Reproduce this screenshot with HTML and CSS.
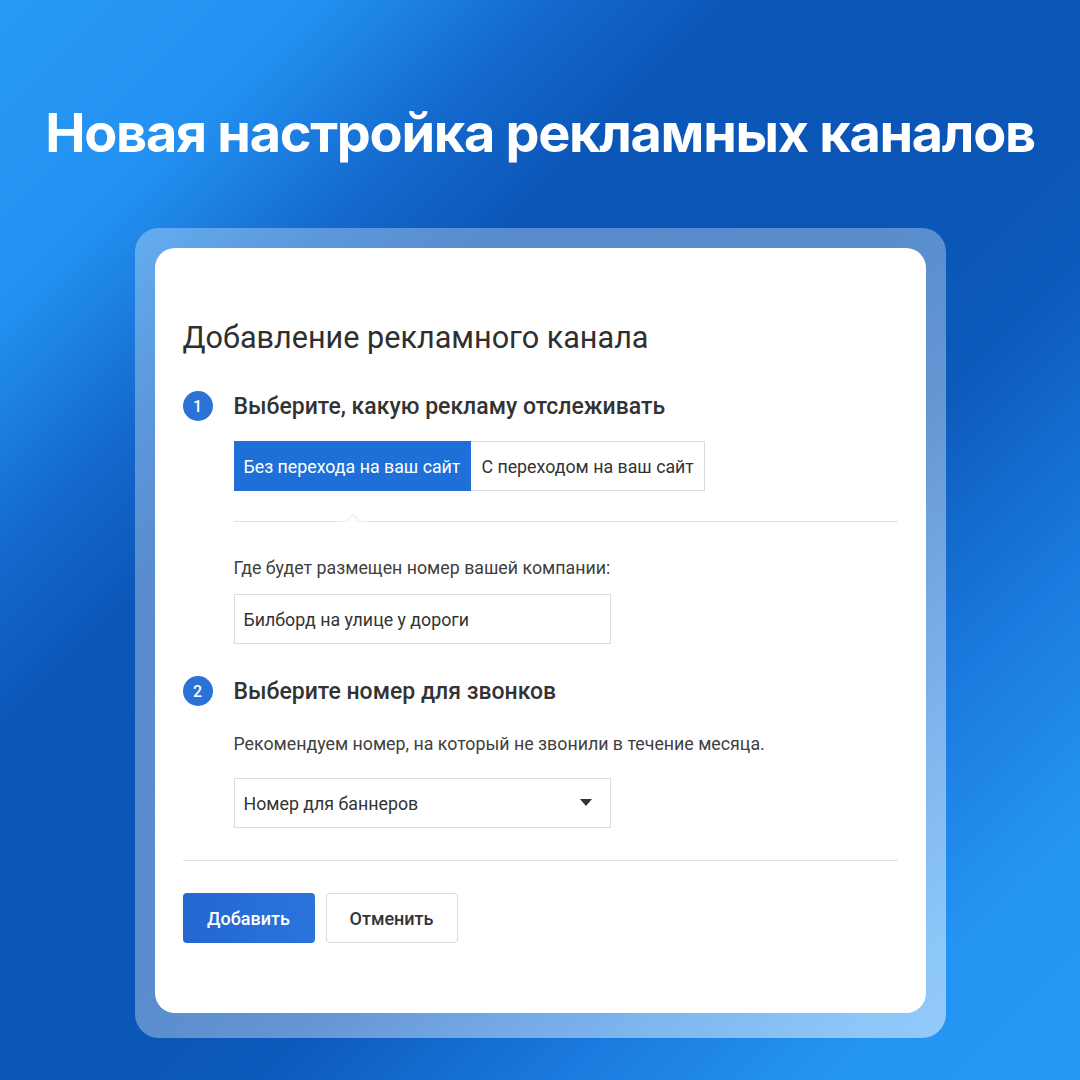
FILE: index.html
```html
<!DOCTYPE html>
<html lang="ru">
<head>
    <meta charset="UTF-8">
    <meta name="viewport" content="width=device-width, initial-scale=1.0">
    <title>Новая настройка рекламных каналов</title>
    <link rel="stylesheet" href="styles.css">
</head>
<body>
    <div class="page">
        <h1 class="headline">Новая настройка рекламных каналов</h1>

        <div class="glass">
            <div class="card">
                <h2 class="card-title">Добавление рекламного канала</h2>

                <div class="step">
                    <span class="step-num">1</span>
                    <span class="step-title">Выберите, какую рекламу отслеживать</span>
                </div>

                <div class="step-body">
                    <div class="tabs">
                        <button class="tab active">Без перехода на ваш сайт</button>
                        <button class="tab">С переходом на ваш сайт</button>
                    </div>
                    <div class="tab-rail">
                        <svg class="notch" width="30" height="10" viewBox="0 0 30 10">
                            <path d="M0 9.5 L8 9.5 L15 2.5 L22 9.5 L30 9.5" fill="#fff" stroke="#e0e0e0" stroke-width="1"/>
                            <rect x="0" y="9.5" width="30" height="1" fill="#fff"/>
                        </svg>
                    </div>

                    <p class="label">Где будет размещен номер вашей компании:</p>
                    <div class="field">Билборд на улице у дороги</div>
                </div>

                <div class="step step-second">
                    <span class="step-num">2</span>
                    <span class="step-title">Выберите номер для звонков</span>
                </div>

                <div class="step-body">
                    <p class="hint">Рекомендуем номер, на который не звонили в течение месяца.</p>
                    <div class="field select">
                        <span>Номер для баннеров</span>
                        <svg width="12" height="8" viewBox="0 0 12 8">
                            <path d="M0 0 H12 L6 7 Z" fill="#333"/>
                        </svg>
                    </div>
                </div>

                <hr class="divider">

                <div class="actions">
                    <button class="btn btn-primary">Добавить</button>
                    <button class="btn btn-secondary">Отменить</button>
                </div>
            </div>
        </div>
    </div>
</body>
</html>
```

FILE: styles.css
```css
* {
    box-sizing: border-box;
}

body {
    margin: 0;
    width: 1080px;
    height: 1080px;
    overflow: hidden;
    font-family: Roboto, "Noto Sans", sans-serif;
    background: linear-gradient(135deg, #2899f7 0%, #2290f0 15%, #1468cc 26%, #0b57b8 34%, #0a55b5 50%, #0c5abb 62%, #1a78dd 75%, #2494f2 88%, #2698f5 100%);
}

.page {
    display: flex;
    flex-direction: column;
    align-items: center;
    height: 100%;
}

.headline {
    margin: 99px 0 0;
    font-family: Inter, "Noto Sans", sans-serif;
    font-weight: 700;
    font-size: 54px;
    line-height: 68px;
    letter-spacing: -1.3px;
    color: #ffffff;
    white-space: nowrap;
}

.glass {
    margin-top: 61px;
    width: 811px;
    padding: 20px 20px 25px;
    border-radius: 24px;
    background: linear-gradient(135deg, rgba(255, 255, 255, 0.3) 0%, rgba(255, 255, 255, 0.33) 50%, rgba(255, 255, 255, 0.5) 100%);
}

.card {
    background: #ffffff;
    border-radius: 20px;
    padding: 72px 28px 70px;
    color: #333333;
}

.card-title {
    margin: 0;
    font-size: 30.6px;
    line-height: 36px;
    font-weight: 400;
    color: #2f2f2f;
}

.step {
    display: flex;
    align-items: center;
    gap: 21px;
    margin-top: 35px;
    height: 30px;
}

.step-second {
    margin-top: 32px;
}

.step-num {
    width: 30px;
    height: 30px;
    border-radius: 50%;
    background: #2a72d6;
    color: #ffffff;
    font-size: 16px;
    font-weight: 500;
    display: flex;
    align-items: center;
    justify-content: center;
}

.step-title {
    font-size: 23px;
    font-weight: 500;
    color: #333333;
}

.step-body {
    padding-left: 51px;
}

.tabs {
    display: flex;
    margin-top: 20px;
}

.tab {
    height: 50px;
    padding: 0 10px;
    font-family: Roboto, sans-serif;
    font-size: 17.8px;
    color: #333333;
    background: #ffffff;
    border: 1px solid #dadada;
    border-left: none;
}

.tab.active {
    background: #1e6fd7;
    border-color: #1e6fd7;
    color: #ffffff;
}

.tab-rail {
    position: relative;
    margin-top: 30px;
    height: 1px;
    background: #e0e0e0;
}

.notch {
    position: absolute;
    left: 104px;
    top: -9px;
}

.label,
.hint {
    margin: 0;
    font-size: 17.8px;
    line-height: 20px;
    color: #404040;
}

.label {
    margin-top: 36px;
}

.hint {
    margin-top: 28px;
}

.field {
    width: 377px;
    height: 50px;
    margin-top: 16px;
    padding: 0 9px;
    border: 1px solid #dadada;
    display: flex;
    align-items: center;
    font-size: 17.8px;
    color: #333333;
}

.select {
    margin-top: 24px;
    justify-content: space-between;
    padding-right: 18px;
}

.divider {
    margin: 32px 0 0;
    border: none;
    border-top: 1px solid #e0e0e0;
}

.actions {
    display: flex;
    gap: 11px;
    margin-top: 32px;
}

.btn {
    width: 132px;
    height: 50px;
    border-radius: 4px;
    font-family: Roboto, sans-serif;
    font-size: 18px;
    font-weight: 500;
}

.btn-primary {
    background: linear-gradient(90deg, #2367d2, #2b74dc);
    border: none;
    color: #ffffff;
}

.btn-secondary {
    background: #ffffff;
    border: 1px solid #dadada;
    color: #333333;
}
```
